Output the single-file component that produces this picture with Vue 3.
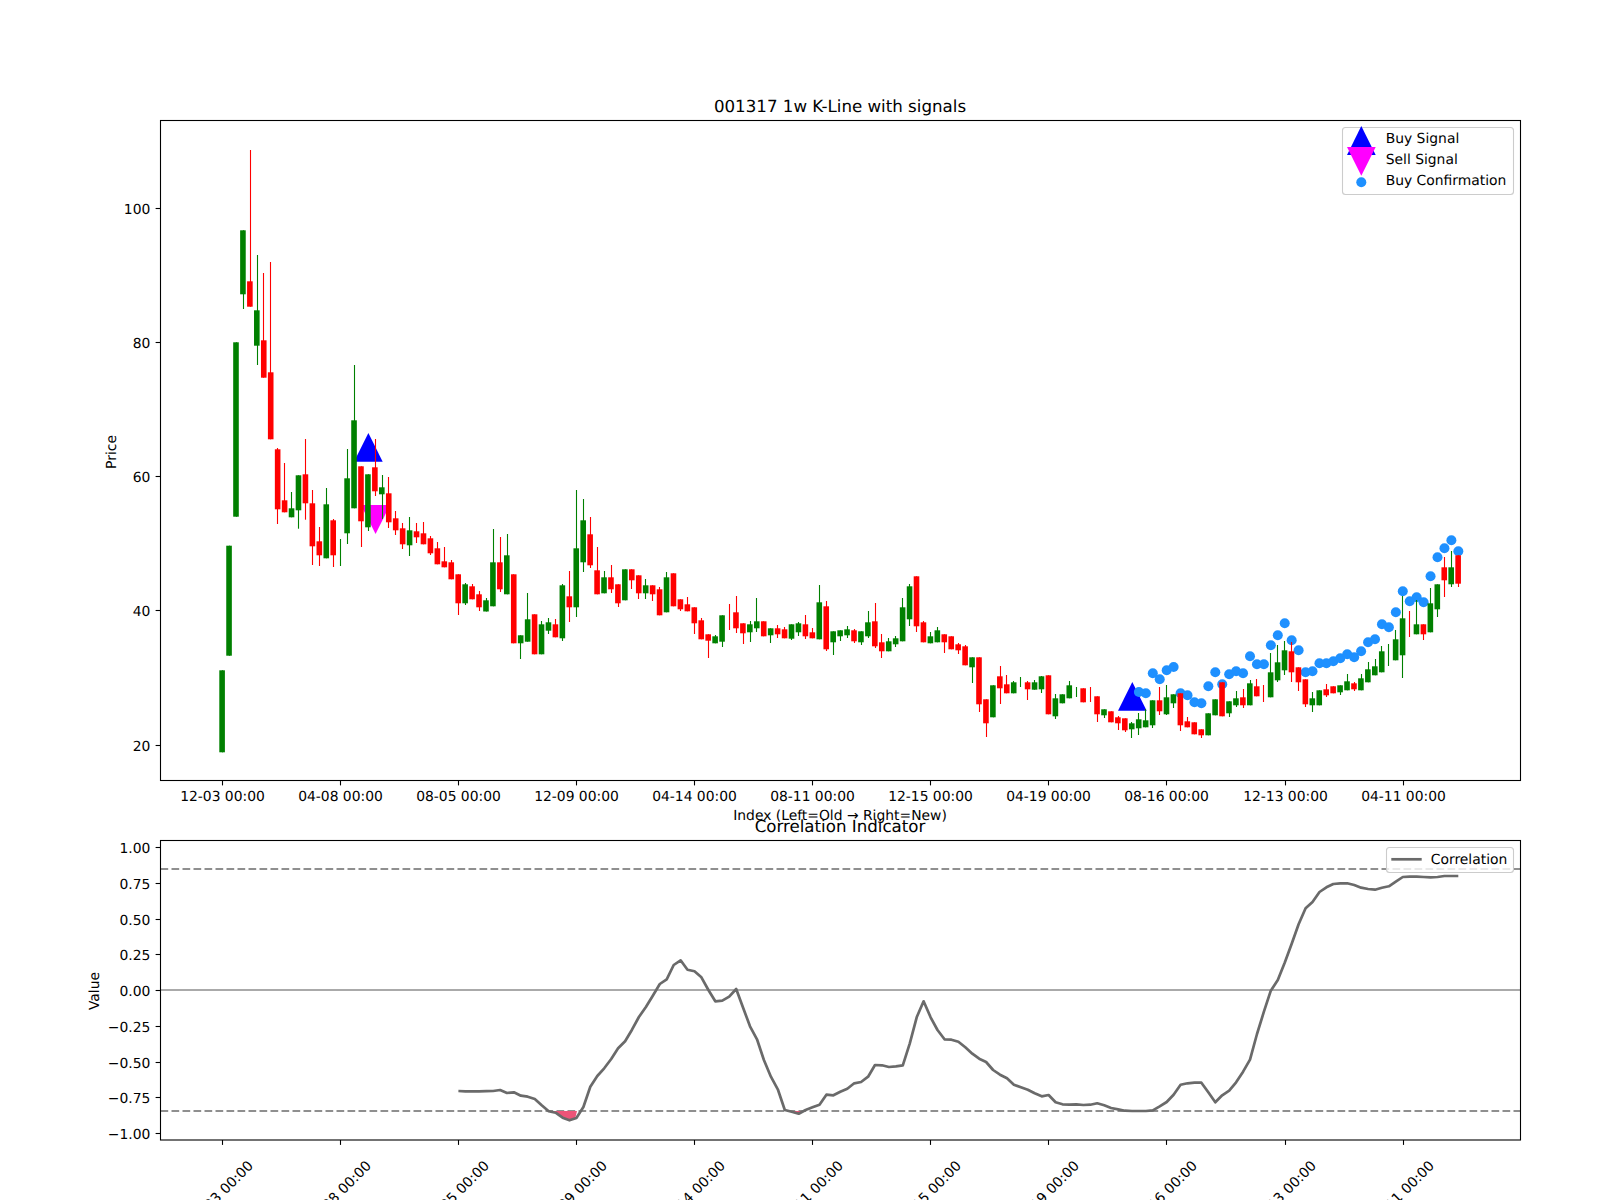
<script setup>
// pixel layout of the two axes (figure is 1600x1200)
const LEFT = 160.5
const RIGHT = 1520.5
const TICK0 = 222.3
const STEP = 6.944

const xAt = (i) => TICK0 + STEP * i

const dates = ['12-03', '04-08', '08-05', '12-09', '04-14', '08-11', '12-15', '04-19', '08-16', '12-13', '04-11']
const tickX = [222.5, 340.5, 458.5, 576.5, 694.5, 812.5, 930.5, 1048.5, 1166.5, 1285.5, 1403.5]
const xTicks = dates.map((d, n) => ({ x: tickX[n], label: `${d} 00:00` }))

const priceTicks = [
  { y: 208.5, label: '100' },
  { y: 342.5, label: '80' },
  { y: 476.5, label: '60' },
  { y: 610.5, label: '40' },
  { y: 745.5, label: '20' },
]

const corrTicks = [
  { y: 847.5, label: '1.00' },
  { y: 883.5, label: '0.75' },
  { y: 919.5, label: '0.50' },
  { y: 954.5, label: '0.25' },
  { y: 990.5, label: '0.00' },
  { y: 1026.5, label: '−0.25' },
  { y: 1062.5, label: '−0.50' },
  { y: 1097.5, label: '−0.75' },
  { y: 1133.5, label: '−1.00' },
]

// colour, wick top, body top, body bottom, wick bottom (null body = doji, wick only)
const raw = [
  ['g', 670.3, 670.3, 752.3, 752.3], ['g', 545.7, 545.7, 655.7, 655.7], ['g', 342.3, 342.3, 516.7, 516.7],
  ['g', 230.3, 230.3, 294.3, 309], ['r', 150, 281.3, 306.7, 306.7], ['g', 255, 310.3, 345.7, 365],
  ['r', 273, 340.3, 377.7, 377.7], ['r', 262, 372.3, 439.3, 439.3], ['r', 448, 449.3, 509.3, 524],
  ['r', 463, 500.3, 512.3, 512.3], ['g', 492, 508.3, 517.3, 517.3], ['g', 475.3, 475.3, 510.3, 528.7],
  ['r', 439, 474.3, 503.3, 519.7], ['r', 490, 503.3, 546.3, 565], ['r', 527, 541.3, 555.3, 566],
  ['g', 488, 504.3, 558.3, 558.3], ['r', 519, 520.3, 555.3, 567], ['g', 539, null, null, 566],
  ['g', 449, 478.3, 533.3, 544], ['g', 365, 420.3, 508.3, 508.3], ['r', 466.3, 466.3, 521.3, 547],
  ['g', 474.3, 474.3, 527.3, 531], ['r', 439, 467.3, 491.3, 496], ['g', 475, 487.3, 494.3, 519],
  ['r', 477, 493.3, 522.3, 528], ['r', 511, 518.3, 530.3, 535], ['r', 523, 528.3, 544.3, 549],
  ['g', 517, 530.3, 545.3, 556], ['r', 523, 531.3, 537.3, 543], ['r', 522, 533.3, 544.3, 544.3],
  ['r', 536, 538.3, 553.3, 555], ['r', 542, 548.3, 564.3, 564.3], ['r', 547, 561.3, 567.3, 567.3],
  ['r', 560, 562.3, 579.3, 579.3], ['r', 574.3, 574.3, 603.3, 615], ['g', 583, 584.3, 603.3, 605],
  ['r', 584, 586.3, 599.3, 599.3], ['r', 591, 594.3, 607.3, 611], ['g', 598, 600.3, 611.5, 611.5],
  ['g', 529, 562.3, 606.3, 606.3], ['r', 537, 562.3, 589.3, 592], ['g', 534, 555.3, 594.3, 594.3],
  ['r', 574.3, 574.3, 643.3, 643.3], ['g', 635.3, 635.3, 643.3, 659], ['g', 593, 619.3, 641.7, 641.7],
  ['r', 614.3, 614.3, 654.3, 654.3], ['g', 621, 624.3, 654.3, 654.3], ['g', 618, 622.3, 630.7, 634],
  ['r', 619, 624.3, 637.3, 637.3], ['g', 584, 585.3, 638.3, 641], ['r', 571, 596.3, 607.3, 622],
  ['g', 490, 548.3, 607.3, 617], ['g', 499, 520.3, 562.3, 572], ['r', 517, 534.3, 565.3, 568],
  ['r', 547, 570.3, 594.3, 594.3], ['g', 571, 577.3, 593.3, 593.3], ['r', 565, 577.3, 589.3, 593],
  ['r', 584.3, 584.3, 603.3, 607], ['g', 569.3, 569.3, 600.3, 600.3], ['r', 569.3, 569.3, 580.3, 589],
  ['r', 575.3, 575.3, 593.3, 599], ['g', 579, 585.3, 593.3, 599], ['r', 585.3, 585.3, 594.3, 601],
  ['r', 587, 589.3, 615.3, 615.3], ['g', 572, 577.3, 612.3, 612.3], ['r', 573.3, 573.3, 606.3, 606.3],
  ['r', 599.3, 599.3, 609.3, 611], ['r', 597, 604.3, 611.3, 611.3], ['r', 607.3, 607.3, 623.3, 634],
  ['r', 618, 620.3, 639.3, 639.3], ['r', 634.3, 634.3, 640.7, 658], ['g', 635, 636.3, 643.3, 643.3],
  ['g', 615.3, 615.3, 641.7, 647], ['r', 604, null, null, 630], ['r', 596, 612.3, 628.3, 633],
  ['r', 623.3, 623.3, 633.3, 644], ['g', 621, 624.3, 632.3, 642], ['g', 598, 621.3, 628.3, 632],
  ['r', 621.3, 621.3, 636.3, 636.3], ['g', 628.3, 628.3, 635.3, 643], ['r', 625, 628.3, 634.3, 638],
  ['r', 627, 629.3, 638.3, 638.3], ['g', 624.3, 624.3, 638.7, 640], ['g', 622, 623.3, 632.3, 636],
  ['r', 615, 624.3, 636.3, 639], ['r', 628, 632.3, 638.3, 638.3], ['g', 585, 602.3, 639.3, 639.3],
  ['r', 601, 606.3, 649.3, 651], ['g', 631.3, 631.3, 642.3, 655], ['g', 630.3, 630.3, 636.3, 641],
  ['g', 626, 629.3, 635.3, 638], ['r', 629, 630.3, 641.3, 643], ['g', 631.3, 631.3, 642.3, 645],
  ['g', 611, 622.3, 636.3, 638], ['r', 603, 621.3, 646.3, 648], ['r', 634, 642.3, 651.3, 658],
  ['g', 638, 641.3, 651.3, 651.3], ['g', 636, 638.3, 644.3, 647], ['g', 598, 607.3, 641.3, 641.3],
  ['g', 584, 586.3, 619.3, 626], ['r', 576.3, 576.3, 626.3, 632], ['r', 621, 622.3, 642.3, 642.3],
  ['g', 632, 636.3, 643.3, 643.3], ['g', 627, 630.3, 642.3, 642.3], ['r', 634.3, 634.3, 642.3, 653],
  ['r', 636.3, 636.3, 649.3, 649.3], ['r', 643, 644.3, 650.3, 654], ['r', 645, 646.3, 665.3, 665.3],
  ['g', 657.3, 657.3, 667.3, 683], ['r', 657.3, 657.3, 704.3, 712], ['r', 699.3, 699.3, 723.3, 737],
  ['g', 685.3, 685.3, 717.3, 717.3], ['r', 666, 676.3, 688.3, 704], ['r', 675, 684.3, 693.3, 693.3],
  ['g', 681, 682.3, 693.3, 693.3], ['g', 677, null, null, 687], ['r', 681, 682.3, 689.3, 700],
  ['g', 680, 682.3, 689.7, 689.7], ['g', 676, 676.3, 689.3, 693], ['r', 675.3, 675.3, 714.3, 714.3],
  ['g', 694, 698.3, 716.3, 719], ['g', 694.3, 694.3, 703.3, 703.3], ['g', 681, 685.3, 698.3, 698.3],
  ['g', 687, null, null, 697], ['r', 688.3, 688.3, 702.3, 702.3], ['r', 687, null, null, 702],
  ['r', 696.3, 696.3, 714.3, 722], ['g', 709.3, 709.3, 715.3, 718], ['r', 711.3, 711.3, 722.3, 722.3],
  ['r', 716, 717.3, 723.3, 730], ['r', 718.3, 718.3, 730.3, 732], ['g', 722, 723.3, 729.3, 738],
  ['g', 713, 719.3, 728.3, 735], ['g', 709, 720.3, 727.3, 727.3], ['g', 700.3, 700.3, 725.3, 728],
  ['r', 687, 700.3, 711.3, 715], ['g', 685, 697.3, 714.3, 715], ['g', 694.3, 694.3, 703.3, 708],
  ['r', 693.3, 693.3, 725.3, 731], ['r', 717, 721.3, 727.3, 727.3], ['r', 722.3, 722.3, 734.3, 734.3],
  ['r', 729.3, 729.3, 735.3, 738], ['g', 713.3, 713.3, 735.3, 735.3], ['g', 699.3, 699.3, 715.3, 715.3],
  ['r', 682.3, 682.3, 716.3, 716.3], ['g', 701.3, 701.3, 713.3, 717], ['g', 691, 698.3, 705.3, 707],
  ['r', 689, 697.3, 705.3, 708], ['g', 680, 683.3, 705.3, 705.3], ['r', 679, 686.3, 696.3, 696.3],
  ['r', 685, null, null, 702], ['g', 653, 672.3, 697.3, 697.3], ['g', 645, 662.3, 680.3, 682],
  ['g', 641, 650.3, 670.3, 675], ['r', 642, 651.3, 672.3, 682], ['r', 667.3, 667.3, 682.3, 691],
  ['r', 679.3, 679.3, 704.3, 707], ['g', 692, 698.3, 705.3, 712], ['g', 690.3, 690.3, 705.3, 705.3],
  ['r', 684, 689.3, 695.3, 697], ['r', 686.3, 686.3, 693.3, 693.3], ['g', 685.3, 685.3, 692.3, 695],
  ['g', 674, 681.3, 690.3, 690.3], ['r', 682, 683.3, 689.3, 691], ['g', 674, 678.3, 690.3, 690.3],
  ['g', 662, 669.3, 682.3, 682.3], ['g', 659, 666.3, 675.3, 675.3], ['g', 646, 651.3, 672.3, 672.3],
  ['g', 644, null, null, 666], ['g', 630, 639.3, 660.3, 660.3], ['g', 596, 618.3, 655.3, 678],
  ['r', 611, null, null, 637], ['g', 600, 624.3, 634.3, 634.3], ['r', 624.3, 624.3, 634.3, 640],
  ['g', 588, 603.3, 632.3, 632.3], ['g', 584.3, 584.3, 609.3, 617], ['r', 557, 567.3, 580.3, 597],
  ['g', 551, 567.3, 584.3, 587], ['r', 555.3, 555.3, 583.7, 587],
]

const candles = raw.map(([c, high, top, bottom, low], i) => ({
  id: i,
  x: xAt(i),
  wickX: Math.floor(xAt(i)) + 0.5,
  cls: c === 'g' ? 'up' : 'down',
  high,
  low,
  top,
  bottom,
}))

// confirmation dots run from candle 132 to the last one
const confirmY = [
  692, 693.3, 673.3, 679.3, 670.3, 667, 693.3, 695.3, 702.3, 703.3,
  686.3, 672.3, 684.3, 674.3, 671.3, 673.3, 656.3, 664.3, 664.3, 645.3,
  635.3, 623.3, 640.3, 650.3, 672.3, 671.3, 663.3, 663.3, 661.3, 658.3,
  654.3, 657.3, 651.3, 642.3, 639.3, 624.3, 627.3, 612.3, 591.3, 601.3,
  597.3, 602.3, 576.3, 557.3, 548.3, 540.3, 551.3,
]
const confirmations = confirmY.map((y, n) => ({ x: xAt(132 + n), y }))

// correlation, one value per candle from candle 34
const corrY = [
  1091, 1091.3, 1091.3, 1091.3, 1091.2, 1091, 1090, 1093, 1092.3, 1095.7,
  1096.7, 1099, 1105.3, 1111.3, 1112.7, 1117.7, 1120.3, 1118, 1107, 1086.7,
  1076, 1068.3, 1059, 1048.3, 1041.3, 1029.7, 1017, 1007, 995.7, 984,
  979.3, 965, 960.3, 969.7, 971.3, 977.3, 990, 1001.3, 1000.7, 996.7,
  989, 1007.7, 1026.3, 1039.3, 1060, 1076.7, 1089.3, 1110, 1111.7, 1113.7,
  1110, 1107.3, 1104.7, 1094.7, 1095.3, 1091.7, 1088.7, 1083.3, 1082, 1076.7,
  1065, 1065.3, 1067, 1066.3, 1065.3, 1043.3, 1017.3, 1001.3, 1017.3, 1030,
  1039.3, 1039.7, 1041.7, 1047.3, 1053.7, 1058.7, 1062, 1070, 1074.7, 1078.3,
  1084.7, 1087.3, 1089.7, 1093.3, 1096.3, 1095, 1102.3, 1104.3, 1104.7, 1104.3,
  1105, 1104.7, 1103.3, 1105.3, 1108, 1109.3, 1110.7, 1111, 1111, 1111,
  1110.3, 1106.3, 1102, 1094.7, 1084.7, 1083.3, 1082.7, 1082.7, 1092.3, 1102.3,
  1095.3, 1090.7, 1082.3, 1071.7, 1059.7, 1034, 1011.7, 990.7, 980, 962.7,
  943.7, 924.3, 908.3, 902, 892, 887.3, 884, 883.3, 883.3, 885,
  887.7, 889, 889.7, 887.7, 886.3, 881.7, 877, 876.7, 876.7, 877,
  877.3, 877, 876, 876, 876,
]
const corrLine = corrY.map((y, n) => `${xAt(34 + n).toFixed(1)},${y}`).join(' ')

const oversoldFill = [
  '552,1111 555.3,1112.7 562.3,1117.7 569.3,1120.3 575.3,1118 577,1111',
  '791,1111 798.3,1113.7 804,1111',
]
</script>

<template>
  <svg class="figure" viewBox="0 0 1600 1200" width="1600" height="1200">
    <rect class="paper" x="0" y="0" width="1600" height="1200" />

    <!-- price panel -->
    <text class="title" x="840" y="112">001317 1w K-Line with signals</text>

    <polygon class="buy" points="368.4,433 354,461.7 382.7,461.7" />
    <polygon class="buy" points="1132.3,682 1118,710.7 1146.7,710.7" />
    <polygon class="sell" points="361,505 390,505 375.6,534" />

    <circle v-for="(p, n) in confirmations" :key="n" class="confirm" :cx="p.x" :cy="p.y" r="5" />

    <g v-for="c in candles" :key="c.id" :class="c.cls">
      <line class="wick" :x1="c.wickX" :x2="c.wickX" :y1="c.high" :y2="c.low" />
      <rect v-if="c.top !== null" class="body" :x="c.x - 3" :y="c.top" width="5.6" :height="c.bottom - c.top" />
    </g>

    <rect class="frame" :x="LEFT" y="120.5" :width="RIGHT - LEFT" height="660" />

    <g v-for="t in xTicks" :key="t.label">
      <line class="tick" :x1="t.x" :x2="t.x" y1="780.5" y2="785.4" />
      <text class="label center" :x="t.x" y="801.3">{{ t.label }}</text>
    </g>
    <g v-for="t in priceTicks" :key="t.label">
      <line class="tick" :x1="LEFT - 4.9" :x2="LEFT" :y1="t.y" :y2="t.y" />
      <text class="label end" x="150.3" :y="t.y + 5">{{ t.label }}</text>
    </g>
    <text class="label center" x="840" y="820.3">Index (Left=Old → Right=New)</text>
    <text class="label center" transform="translate(115.7 452) rotate(-90)">Price</text>

    <g class="legend">
      <rect class="legend-box" x="1342.5" y="127.5" width="171" height="67" rx="3" />
      <polygon class="buy" points="1361.3,126 1347,155 1375.7,155" />
      <polygon class="sell" points="1347,147 1375.7,147 1361.3,175.7" />
      <circle class="confirm" cx="1361.3" cy="182.3" r="5" />
      <text class="label" x="1385.7" y="143.3">Buy Signal</text>
      <text class="label" x="1385.7" y="164.3">Sell Signal</text>
      <text class="label" x="1385.7" y="185.3">Buy Confirmation</text>
    </g>

    <!-- correlation panel -->
    <text class="title" x="840" y="831.7">Correlation Indicator</text>

    <line class="limit" :x1="LEFT" :x2="RIGHT" y1="869" y2="869" />
    <line class="limit" :x1="LEFT" :x2="RIGHT" y1="1111" y2="1111" />
    <line class="zero" :x1="LEFT" :x2="RIGHT" y1="990" y2="990" />
    <polygon v-for="pts in oversoldFill" :key="pts" class="oversold" :points="pts" />
    <polyline class="corr" :points="corrLine" />

    <rect class="frame" :x="LEFT" y="840.5" :width="RIGHT - LEFT" height="299.5" />

    <g v-for="t in xTicks" :key="t.label">
      <line class="tick" :x1="t.x" :x2="t.x" y1="1140" y2="1144.9" />
      <text class="label center" :transform="`translate(${t.x - 2} 1193) rotate(-45)`" y="5">{{ t.label }}</text>
    </g>
    <g v-for="t in corrTicks" :key="t.label">
      <line class="tick" :x1="LEFT - 4.9" :x2="LEFT" :y1="t.y" :y2="t.y" />
      <text class="label end" x="150.3" :y="t.y + 5.5">{{ t.label }}</text>
    </g>
    <text class="label center" transform="translate(98.7 991) rotate(-90)">Value</text>

    <g class="legend">
      <rect class="legend-box" x="1386.5" y="847.5" width="127" height="25" rx="3" />
      <line class="corr" x1="1391.3" x2="1421.7" y1="859.3" y2="859.3" />
      <text class="label" x="1430.8" y="864.3">Correlation</text>
    </g>
  </svg>
</template>

<style scoped>
.figure {
  display: block;
  font-family: "DejaVu Sans", sans-serif;
  text-rendering: geometricPrecision;
}

.paper {
  fill: #ffffff;
}

.title {
  font-size: 16.67px;
  text-anchor: middle;
  fill: #000000;
}

.label {
  font-size: 13.89px;
  fill: #000000;
}

.center {
  text-anchor: middle;
}

.end {
  text-anchor: end;
}

.frame {
  fill: none;
  stroke: #000000;
  stroke-width: 1.1;
}

.tick {
  stroke: #000000;
  stroke-width: 1.1;
}

.buy {
  fill: #0000ff;
}

.sell {
  fill: #ff00ff;
}

.confirm {
  fill: #1e90ff;
}

.up .wick {
  stroke: #008000;
}

.up .body {
  fill: #008000;
}

.down .wick {
  stroke: #ff0000;
}

.down .body {
  fill: #ff0000;
}

.wick {
  stroke-width: 1.1;
}

.limit {
  stroke: #8f8f8f;
  stroke-width: 2;
  stroke-dasharray: 7.7 3.3;
}

.zero {
  stroke: #aaaaaa;
  stroke-width: 2;
}

.oversold {
  fill: #ed5478;
}

.corr {
  fill: none;
  stroke: #6a6a6a;
  stroke-width: 2.7;
  stroke-linejoin: round;
}

.legend-box {
  fill: rgba(255, 255, 255, 0.8);
  stroke: #cccccc;
  stroke-width: 1.1;
}
</style>
